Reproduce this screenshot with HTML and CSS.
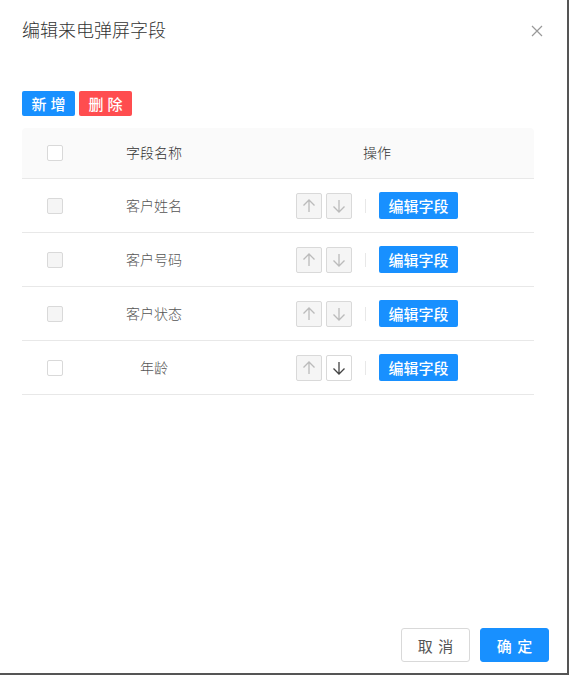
FILE: index.html
```html
<!DOCTYPE html>
<html lang="zh">
<head>
<meta charset="utf-8">
<link rel="stylesheet" href="styles.css">
</head>
<body>
<div class="dialog">
  <div class="head">
    <div class="title">编辑来电弹屏字段</div>
    <svg class="close" width="12" height="12" viewBox="0 0 12 12"><path d="M1 1L11 11M11 1L1 11" stroke="#999" stroke-width="1.2" fill="none"/></svg>
  </div>
  <div class="toolbar">
    <button class="btn-sm blue">新增</button>
    <button class="btn-sm red">删除</button>
  </div>
  <div class="table">
    <div class="row thead">
      <div class="c1"><span class="cb"></span></div>
      <div class="c2">字段名称</div>
      <div class="c3">操作</div>
    </div>
    <div class="row">
      <div class="c1"><span class="cb dis"></span></div>
      <div class="c2">客户姓名</div>
      <div class="c3 ops">
        <span class="arr dis"><svg width="16" height="16" viewBox="0 0 16 16"><path d="M8 14V2M2.5 7.5L8 2L13.5 7.5" /></svg></span>
        <span class="arr dis"><svg width="16" height="16" viewBox="0 0 16 16"><path d="M8 2V14M2.5 8.5L8 14L13.5 8.5" /></svg></span>
        <span class="sep"></span>
        <button class="edit">编辑字段</button>
      </div>
    </div>
    <div class="row">
      <div class="c1"><span class="cb dis"></span></div>
      <div class="c2">客户号码</div>
      <div class="c3 ops">
        <span class="arr dis"><svg width="16" height="16" viewBox="0 0 16 16"><path d="M8 14V2M2.5 7.5L8 2L13.5 7.5" /></svg></span>
        <span class="arr dis"><svg width="16" height="16" viewBox="0 0 16 16"><path d="M8 2V14M2.5 8.5L8 14L13.5 8.5" /></svg></span>
        <span class="sep"></span>
        <button class="edit">编辑字段</button>
      </div>
    </div>
    <div class="row">
      <div class="c1"><span class="cb dis"></span></div>
      <div class="c2">客户状态</div>
      <div class="c3 ops">
        <span class="arr dis"><svg width="16" height="16" viewBox="0 0 16 16"><path d="M8 14V2M2.5 7.5L8 2L13.5 7.5" /></svg></span>
        <span class="arr dis"><svg width="16" height="16" viewBox="0 0 16 16"><path d="M8 2V14M2.5 8.5L8 14L13.5 8.5" /></svg></span>
        <span class="sep"></span>
        <button class="edit">编辑字段</button>
      </div>
    </div>
    <div class="row">
      <div class="c1"><span class="cb"></span></div>
      <div class="c2">年龄</div>
      <div class="c3 ops">
        <span class="arr dis"><svg width="16" height="16" viewBox="0 0 16 16"><path d="M8 14V2M2.5 7.5L8 2L13.5 7.5" /></svg></span>
        <span class="arr"><svg width="16" height="16" viewBox="0 0 16 16"><path d="M8 2V14M2.5 8.5L8 14L13.5 8.5" /></svg></span>
        <span class="sep"></span>
        <button class="edit">编辑字段</button>
      </div>
    </div>
  </div>
  <div class="spacer"></div>
  <div class="foot">
    <button class="btn cancel">取 消</button>
    <button class="btn ok">确 定</button>
  </div>
</div>
</body>
</html>
```
FILE: styles.css
```css
html, body {
  margin: 0;
  padding: 0;
  background: #555;
}
body {
  font-family: "Noto Sans CJK SC", "Noto Sans", sans-serif;
  width: 569px;
  height: 675px;
  overflow: hidden;
}
.dialog {
  width: 567px;
  height: 673px;
  background: #fff;
  display: flex;
  flex-direction: column;
  box-sizing: border-box;
  padding: 17px 18px 11px 22px;
}
.head {
  display: flex;
  justify-content: space-between;
  align-items: center;
  height: 24px;
  padding-right: 6px;
}
.title {
  font-size: 18px;
  line-height: 24px;
  color: #333;
  font-weight: 300;
}
.close {
  margin-top: 4px;
}
.toolbar {
  display: flex;
  gap: 4px;
  margin-top: 50px;
}
button {
  font-family: inherit;
  cursor: pointer;
}
.btn-sm {
  height: 25px;
  width: 53px;
  border: none;
  border-radius: 2px;
  color: #fff;
  font-size: 15px;
  font-weight: 500;
  letter-spacing: 4px;
  padding: 0 0 0 4px;
  line-height: 25px;
}
.blue { background: #1890ff; }
.red { background: #ff4d4f; }
.table {
  width: 512px;
  margin-top: 12px;
}
.row {
  display: grid;
  grid-template-columns: 66px 132px 314px;
  height: 53px;
  border-bottom: 1px solid #e8e8e8;
  align-items: center;
  font-size: 14px;
  font-weight: 300;
  color: #555;
}
.thead {
  height: 50px;
  background: #fafafa;
  border-radius: 4px 4px 0 0;
  color: #333;
}
.c1 {
  display: flex;
  justify-content: center;
}
.c2, .c3 {
  text-align: center;
  line-height: 20px;
  margin-top: -2px;
}
.cb {
  width: 14px;
  height: 14px;
  border: 1px solid #d9d9d9;
  border-radius: 2px;
  background: #fff;
  display: block;
}
.cb.dis {
  background: #f5f5f5;
}
.ops {
  display: flex;
  justify-content: center;
  align-items: center;
  margin-top: 0;
}
.arr {
  width: 24px;
  height: 24px;
  border: 1px solid #d9d9d9;
  border-radius: 2px;
  background: #fff;
  display: flex;
  align-items: center;
  justify-content: center;
  margin-right: 4px;
}
.arr + .arr {
  margin-right: 0;
}
.arr svg path {
  fill: none;
  stroke: #444;
  stroke-width: 1.3;
}
.arr.dis {
  background: #f5f5f5;
}
.arr.dis svg path {
  stroke: #bbb;
}
.sep {
  width: 1px;
  height: 14px;
  background: #e8e8e8;
  margin: 0 13px;
}
.edit {
  width: 79px;
  height: 27px;
  border: none;
  border-radius: 2px;
  background: #1890ff;
  color: #fff;
  font-size: 15px;
  font-weight: 500;
  padding: 0;
}
.spacer {
  flex: 1;
}
.foot {
  display: flex;
  justify-content: flex-end;
  gap: 10px;
}
.btn {
  width: 69px;
  height: 34px;
  border-radius: 3px;
  font-size: 15px;
  letter-spacing: 1px;
  padding: 0 0 0 1px;
}
.cancel {
  background: #fff;
  border: 1px solid #d9d9d9;
  color: #555;
}
.ok {
  background: #1890ff;
  border: 1px solid #1890ff;
  color: #fff;
  font-weight: 500;
}
```
